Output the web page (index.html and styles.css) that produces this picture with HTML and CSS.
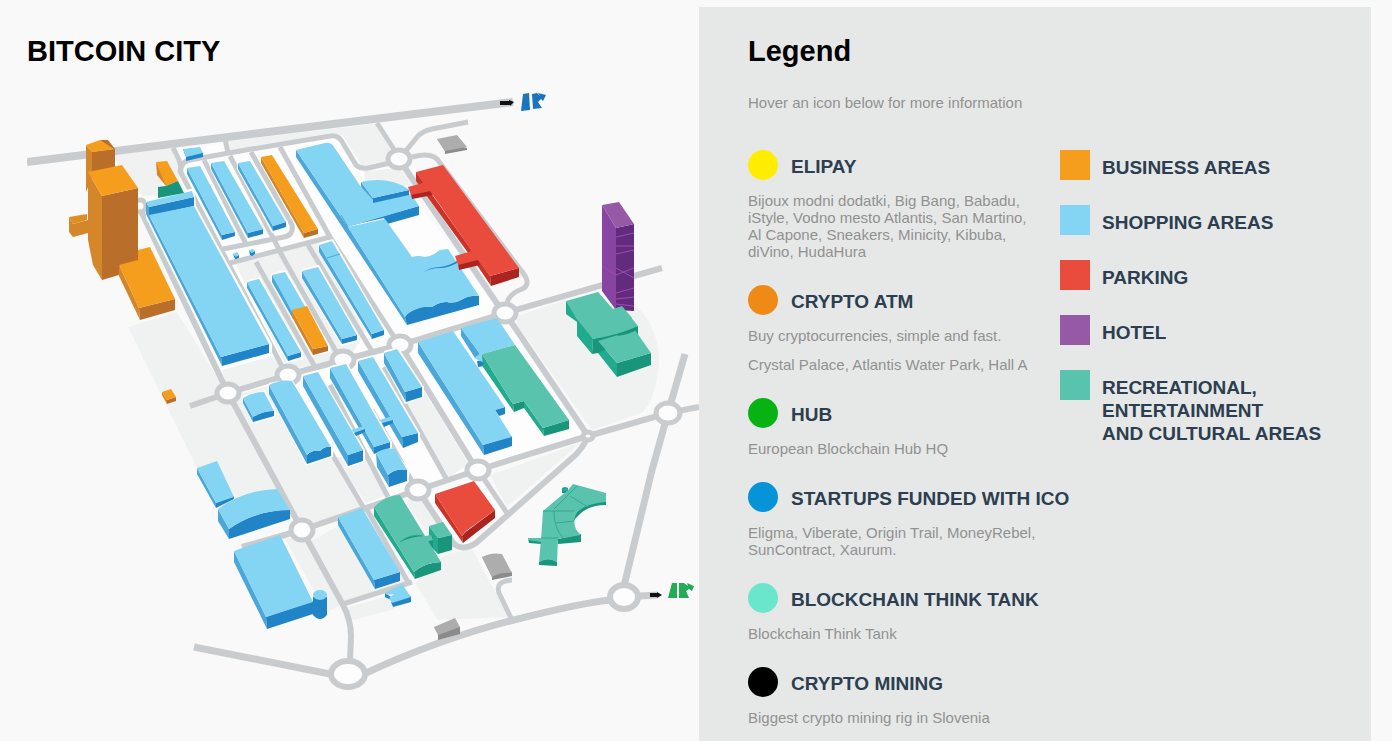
FILE: index.html
```html
<!DOCTYPE html>
<html lang="en">
<head>
<meta charset="utf-8">
<title>Bitcoin City</title>
<link rel="stylesheet" href="styles.css">
</head>
<body>
<main class="page">
<section class="city">
<h1 class="title">BITCOIN CITY</h1>
<svg class="map" viewBox="27 85 672 615" role="img" aria-label="Map of Bitcoin City">
<g class="white">
<path d="M174 149L375 125L398 160L407 190L505 313L588 436L478 472L400 500L345 360L228 393L142 212L146 198L192 188Z"/>
<path d="M228 393L400 345L500 320L585 436L478 470L418 490L302 530Z"/>
<path d="M427 495L478 477L503 513L463 545Z"/>
</g>
<g class="block">
<path d="M115 155L173 148L181 163L179 180L187 193L143 196L118 166Z"/>
<path d="M228 141L375 124L391 150L388 161L362 166L343 136L330 133L228 152Z"/>
<path d="M364 171L400 168L414 188L385 182L365 181Z"/>
<path d="M128 327L177 312L222 385L282 490L235 500L198 470Z"/>
<path d="M222 370L272 356L284 368L280 374L228 390Z"/>
<path d="M235 263L326 240L372 318L350 358L288 370Z"/>
<path d="M230 396L292 380L365 508L302 526Z"/>
<path d="M334 457L366 457L386 496L366 503Z"/>
<path d="M385 375L405 360L469 464L449 477Z"/>
<path d="M517 316L566 300L638 308Q660 330 659 366Q655 400 642 413L592 430L517 325Z"/>
<path d="M490 475L580 443L507 507Z"/>
<path d="M308 543L365 511L405 582L345 602Z"/>
<path d="M284 537L304 540L340 606L326 612Z"/>
<path d="M346 608L388 596L394 609L353 620Z"/>
<path d="M415 583L445 555L472 549L509 617L438 620Z"/>
<path d="M405 500L422 500L445 535L438 550Z"/>
</g>
<g class="road road-main">
<path d="M27 162L260 133L480 106L513 102"/>
</g>
<g class="road">
<path d="M142 213L228 393L302 530L343 605Q351 620 351 636L350 662"/>
<path d="M190 406L228 393L288 375L343 360L400 345L505 313L662 268"/>
<path d="M699 407L668 413L588 436L478 470L418 490L302 530L242 547"/>
<path d="M505 313L588 436"/>
<path d="M400 345L472 462"/>
<path d="M588 436Q583 449 571 459L476 543Q462 552 453 543L418 490"/>
<path d="M405 168L498 305"/>
</g>
<g class="road road-wide">
<path d="M194 647L330 674"/>
<path d="M366 673Q440 639 510 621T610 600"/>
<path d="M624 586L652 470L668 413L685 354"/>
<path d="M624 597L657 595"/>
</g>
<g class="road road-small">
<path d="M173 148Q183 165 180 171L284 370"/>
<path d="M181 172Q180 162 190 160L240 151L330 136Q339 134 344 145L356 165Q360 169 368 168L390 163"/>
<path d="M225 139L228 153"/>
<path d="M204 160L246 244"/>
<path d="M230 156L281 253"/>
<path d="M251 152L292 225Q294 235 284 237L223 249"/>
<path d="M280 147L330 237L398 343"/>
<path d="M230 263L330 237"/>
<path d="M256 262L315 367M280 252L338 355M308 245L373 353"/>
<path d="M290 383L365 510M330 385L388 497M384 367L447 480M372 410L413 483"/>
<path d="M478 470L507 513"/>
<path d="M366 508L408 582"/>
<path d="M343 604L412 582"/>
<path d="M377 123L395 151"/>
<path d="M404 153L418 136Q423 131 432 129L468 122"/>
<path d="M412 157Q434 151 440 163L520 269Q533 284 522 289Q509 294 507 303"/>
<path d="M512 580Q495 581 499 593L511 618"/>
</g>
<g class="ring">
<ellipse cx="140" cy="206" rx="6" ry="6"/>
<ellipse cx="399" cy="159" rx="11" ry="9"/>
<ellipse cx="228" cy="393" rx="11" ry="9"/>
<ellipse cx="288" cy="375" rx="11" ry="9"/>
<ellipse cx="343" cy="360" rx="11" ry="9"/>
<ellipse cx="400" cy="345" rx="11" ry="9"/>
<ellipse cx="505" cy="313" rx="11" ry="9"/>
<ellipse cx="302" cy="530" rx="11" ry="10"/>
<ellipse cx="418" cy="490" rx="11" ry="9"/>
<ellipse cx="478" cy="470" rx="11" ry="9"/>
<ellipse cx="588" cy="436" rx="5" ry="4"/>
<ellipse cx="668" cy="413" rx="12" ry="10"/>
<ellipse class="ring-wide" cx="624" cy="597" rx="14" ry="12"/>
<ellipse class="ring-wide" cx="348" cy="674" rx="17" ry="13"/>
</g>

<g class="plot">
<path d="M146 200L194 188L196 206L272 344V355L221 369L146 218Z"/>
<path d="M187 166L201 164L237 232V237L221 242L186 174ZM211 161L225 159L265 229V234L247 240L210 169ZM238 161L251 159L288 222V227L272 233L237 169Z"/>
<path d="M247 280L260 277L303 353V359L287 363L246 286ZM272 273L286 270L330 346V352L312 357L271 281ZM302 269L319 265L359 336V342L341 346L301 277ZM319 243L333 239L386 331V336L371 341L318 250Z"/>
<path d="M242 396L265 390L276 411V417L252 424ZM269 383L292 379L333 449V457L306 466L268 392ZM303 374L318 370L365 450V462L347 468L302 383ZM330 366L347 362L392 442V448L410 470L408 483L388 490L329 375ZM358 359L374 355L420 433V443L402 450L357 369ZM384 351L398 347L424 387V398L405 404L383 362Z"/>
</g>

<g class="blue-left">
<path d="M146 202L149 207V215L221 357L222 366L146 214Z"/>
<path d="M187 168L222 235V240L187 174ZM211 163L248 233V238L211 169ZM238 163L273 226V231L238 169Z"/>
<path d="M247 282L288 356V361L247 288ZM272 275L293 309V319L272 282ZM302 271L342 339V344L302 278ZM319 245L372 334V339L319 252Z"/>
<path d="M296 150L348 227L405 317L407 325L296 157Z"/>
<path d="M243 398L253 417V422L243 403ZM269 385L307 455V464L269 394ZM303 376L348 455V466L303 386ZM330 368L374 447V454L330 378ZM358 361L402 437L403 448L358 371ZM384 353L405 392L406 402L384 363Z"/>
<path d="M376 453L388 475L389 487L377 467ZM418 342L483 445L484 455L418 353ZM461 328L480 354L475 358L461 336Z"/>
<path d="M197 468L216 503V508L197 474ZM218 509L229 529V539L218 521ZM234 551L266 617L267 629L234 562ZM338 517L374 580L375 589L338 525Z"/>
<path d="M361 182L373 198V203L361 187Z"/>
</g>
<g class="blue-front">
<path d="M149 207L194 197V206L149 216ZM221 357L269 344V353L222 366Z"/>
<path d="M183 149L186 157V161L203 157V153Z"/>
<path d="M222 235L235 232V236L222 240ZM248 233L263 229V234L248 238ZM273 226L286 222V227L273 231Z"/>
<path d="M288 356L301 352V357L288 361ZM342 339L357 335V340L342 344ZM372 334L384 330V335L372 339Z"/>
<path d="M348 226L419 206V215L387 224L384 218Z"/>
<path d="M405 317Q408 312 416 309Q423 306 432 307Q439 302 447 302Q455 304 463 299Q470 295 479 296V305L407 325Z"/>
<path d="M253 417Q263 411 274 411V416L253 422ZM307 455Q313 449 320 451Q325 446 331 447V456L307 464ZM348 455L363 450V461L348 466ZM374 447L390 442V448L374 454ZM402 437L418 433V442L403 448ZM405 392L422 387V397L406 402Z"/>
<path d="M388 475Q396 468 407 470V481L389 487ZM483 445L512 436V446L484 455ZM495 410L505 407V414L499 416ZM477 361L485 360V366L478 367Z"/>
<path d="M216 503L234 496V499L216 508ZM229 529Q256 510 290 510V519L229 539Z"/>
<path d="M266 617L313 601V614L267 629ZM313 597V615Q320 623 327 615V597Z"/>
<path d="M374 580L400 572V581L375 589ZM391 602L411 596V602L393 607ZM385 593L391 597V600L385 597Z"/>
</g>
<g class="blue-top">
<path d="M183 149L200 147L203 153L186 157Z"/>
<path d="M146 202L192 191L194 197L149 207ZM149 215L194 206L269 344L221 357Z"/>
<path d="M187 168L200 166L235 232L222 235ZM211 163L224 161L263 229L248 233ZM238 163L250 161L286 222L273 226Z"/>
<path d="M247 282L259 279L301 352L288 356ZM272 275L285 272L306 308L292 312ZM302 271L318 267L357 335L342 339ZM319 245L332 241L384 330L372 334Z"/>
<path d="M296 150L325 143Q331 142 334 147L361 187L374 201L411 194L419 206L348 227Z"/>
<path d="M348 227L385 219L412 257Q418 255 425 257Q433 256 440 250L448 249L479 296Q470 295 463 299Q455 304 447 302Q439 302 432 307Q423 306 416 309Q408 312 405 317Z"/>
<path d="M243 398Q253 392 264 392L274 411Q263 411 253 417ZM269 385Q281 379 292 381L331 447Q325 446 320 451Q313 449 307 455ZM303 376L318 372L363 450L348 455ZM330 368L346 364L390 442L374 447ZM358 361L373 357L418 433L402 437ZM384 353L397 349L422 387L405 392Z"/>
<path d="M376 453Q385 447 395 449L407 470Q396 468 388 475Z"/>
<path d="M418 342L453 331L505 407L495 410L512 437L483 445ZM461 328L497 318L515 345L482 354L487 364L474 358L480 354Z"/>
<path d="M197 468L217 461L234 497L216 503ZM218 509Q244 490 277 489L290 510Q256 510 229 529ZM234 551L280 535L313 602L266 617Z"/>
<ellipse cx="320" cy="595" rx="7" ry="5"/>
<path d="M338 517L362 508L400 572L374 580ZM385 593L402 584L411 597L392 603L389 598L394 594L387 595Z"/>
<path d="M351 430L364 426L368 431L356 434ZM379 420L393 416L397 421L384 424Z"/>
</g>
<path class="blue-front" d="M373 198L409 190V195L373 203ZM354 433L365 429V432L356 436ZM382 423L393 420V423L384 427Z"/>
<path class="blue-front" d="M422 273Q430 267 440 267Q449 266 457 261V263Q448 268 440 268Q430 268 422 273Z"/>
<path class="blue-top" d="M361 182Q378 178 393 182Q404 185 409 190L373 198Z"/>
<path class="blue-front" d="M233 254L237 257V259L235 259ZM236 256L239 255V258L236 259ZM249 250L252 253V256L250 255ZM252 252L255 251V254L252 256Z"/>
<path class="blue-top" d="M233 254L237 252L239 255L236 257ZM249 250L253 249L255 251L252 253Z"/>
<path class="blue-seam" d="M327 258L340 254M348 227L341 215"/>

<g class="orange-left">
<path d="M86 145L92 152V178L86 192ZM88 172L102 196V280L93 265L88 240ZM69 217L73 224V237L69 232ZM119 265L139 308L140 320L119 276Z"/>
<path d="M156 162L166 182V186L157 175ZM261 157L304 233V238L261 163ZM292 310L313 349V355L292 317ZM162 392L167 400V404L162 395Z"/>
</g>
<g class="orange-front">
<path d="M92 152L115 149V168L92 174ZM102 196L138 188V262L119 267V275L102 280ZM139 308L175 299V310L140 320Z"/>
<path d="M304 233L318 229V234L304 238ZM313 349L328 346V351L313 355ZM167 400L176 397V401L167 404Z"/>
</g>
<path class="orange-left" d="M73 224L88 220V233L73 237Z"/>
<path class="orange-front" d="M100 140L108 140L115 149L112 149Z"/>
<g class="orange-top">
<path d="M86 145L100 140L114 149L92 152ZM88 172L122 165L138 188L102 196Z"/>
<path d="M119 265L138 260V250L150 247L175 299L139 308Z"/>
<path d="M156 162L167 161L178 181L166 186ZM261 157L272 155L318 229L304 233ZM292 310L307 306L328 346L313 349ZM162 392L171 389L176 397L167 400Z"/>
</g>
<path class="orange-cap" d="M69 217L87 214V220L73 224Z"/>
<path class="green-front" d="M158 187L166 186L178 181L184 193L158 198Z"/>

<g class="red-left">
<path d="M416 172L490 276L491 286L479 268L416 181ZM435 494L462 536L463 543L435 503Z"/>
</g>
<g class="red-front">
<path d="M411 194L430 190L433 195L412 199ZM458 264L478 259L480 265L459 270ZM490 276L519 268V277L491 286ZM462 536Q466 531 471 528L495 510V518L463 543Z"/>
</g>
<g class="red-top">
<path d="M416 172L443 165L519 268L490 276L478 260L458 265L455 256L472 251L430 191L411 195L408 187L423 183Z"/>
<path d="M435 494L474 481L495 510L473 526Q466 530 462 536Z"/>
</g>

<g class="green-left">
<path d="M482 354L513 404L514 412L483 367ZM524 401L543 428L544 436L524 408ZM374 507L414 572L415 579L374 516Z"/>
<path d="M566 301L580 319L593 339L592 354L577 336V322L566 314ZM598 341L617 363V377L598 353ZM429 526L438 538V554L429 545Z"/>
</g>
<g class="green-front">
<path d="M513 404L524 401V408L514 412ZM543 428L569 420V429L544 436ZM414 572Q426 562 441 562V570L415 579Z"/>
<path d="M593 339L638 326V335L598 353L592 354ZM617 363L651 353V365L617 377ZM438 538L452 535V550L438 554ZM424 539L433 537V548L424 546Z"/>
<path d="M558 539L581 534V542L558 544ZM539 562Q548 556 557 562V566L539 565ZM528 538L541 541V544L529 543ZM606 493V505Q587 505 577 517Q573 520 574 526Q570 505 606 500ZM562 488V493H568V488Z"/>
</g>
<g class="green-top">
<path d="M482 354L515 345L569 420L543 428L524 401L513 404Z"/>
<path d="M374 507Q386 495 400 495L441 562Q426 562 414 572ZM429 526L443 522L452 535L438 538ZM420 537L431 535L433 540L423 543Z"/>
<path d="M566 301L598 292L613 309L622 306L638 326Q619 335 593 339L576 318ZM598 341L635 330L651 353L617 363Z"/>
<path d="M543 511L568 490L573 484L606 493V502Q582 504 575 515Q572 528 581 535L558 539L557 562Q548 557 539 562L541 540ZM528 538L541 538V542L528 540Z"/>
</g>
<ellipse class="green-dot" cx="565" cy="489" rx="3" ry="2"/>
<path class="green-seam" d="M543 511H574M554 511Q554 528 563 538M556 523L574 521M554 509L577 486M570 496L588 507M541 538H558M400 542Q411 533 423 536"/>
<path class="green-front" d="M400 542Q411 534 423 536Q410 537 400 542ZM618 334L637 328L635 331Q627 335 618 336Z"/>

<path class="hotel-left" d="M602 205L616 228V310L602 291Z"/>
<path class="hotel-front" d="M616 228L634 224V311L616 310Z"/>
<path class="hotel-top" d="M602 205L619 202L634 224L616 228Z"/>
<path class="hotel-lines" d="M616 237L634 233M616 246H634M616 254L634 250M602 266L616 275L634 268M616 268L634 278M616 293L634 288M616 299L634 297M616 304L634 306"/>
<path class="green-top" d="M610 311L616 308L622 306L632 318L622 322Z"/>

<path class="gray-front" d="M437 139L445 151V154L467 150V148ZM482 557L492 577V580L512 576V572ZM434 627L438 634V640L460 634V627Z"/>
<path class="gray-top" d="M437 139L457 135L467 147L445 151ZM482 557Q491 552 502 554L512 573Q501 572 492 577ZM434 627L455 618L460 627L438 635Z"/>

<path class="arrow" d="M500 101L509 101V100L514 102L510 106V105L500 105ZM650 593H657V592L662 595L657 598V597H650Z"/>
<path class="exit-blue" d="M523 94L529 93L530 110L521 111ZM532 94L537 93L540 96L538 93L546 95L543 101L541 99L538 102L542 108L533 109Z"/>
<path class="exit-green" d="M672 583H677V598H668ZM679 583H684L688 586L687 583L694 586L692 591L689 589L686 591L689 598H679Z"/>
</svg>
</section>

<section class="legend">
<h2 class="title">Legend</h2>
<p class="hint">Hover an icon below for more information</p>
<div class="columns">
<ul class="services">
<li class="service"><h3 class="name"><span class="dot dot-yellow"></span>ELIPAY</h3>
<p class="text">Bijoux modni dodatki, Big Bang, Babadu, iStyle, Vodno mesto Atlantis, San Martino, Al Capone, Sneakers, Minicity, Kibuba, diVino, HudaHura</p></li>
<li class="service"><h3 class="name"><span class="dot dot-orange"></span>CRYPTO ATM</h3>
<p class="text">Buy cryptocurrencies, simple and fast.</p>
<p class="text">Crystal Palace, Atlantis Water Park, Hall A</p></li>
<li class="service"><h3 class="name"><span class="dot dot-green"></span>HUB</h3>
<p class="text">European Blockchain Hub HQ</p></li>
<li class="service"><h3 class="name"><span class="dot dot-blue"></span>STARTUPS FUNDED WITH ICO</h3>
<p class="text">Eligma, Viberate, Origin Trail, MoneyRebel, SunContract, Xaurum.</p></li>
<li class="service"><h3 class="name"><span class="dot dot-mint"></span>BLOCKCHAIN THINK TANK</h3>
<p class="text">Blockchain Think Tank</p></li>
<li class="service"><h3 class="name"><span class="dot dot-black"></span>CRYPTO MINING</h3>
<p class="text">Biggest crypto mining rig in Slovenia</p></li>
</ul>
<ul class="areas">
<li class="area"><span class="swatch swatch-business"></span><span class="label">BUSINESS AREAS</span></li>
<li class="area"><span class="swatch swatch-shopping"></span><span class="label">SHOPPING AREAS</span></li>
<li class="area"><span class="swatch swatch-parking"></span><span class="label">PARKING</span></li>
<li class="area"><span class="swatch swatch-hotel"></span><span class="label">HOTEL</span></li>
<li class="area"><span class="swatch swatch-culture"></span><span class="label">RECREATIONAL,<br>ENTERTAINMENT<br>AND CULTURAL AREAS</span></li>
</ul>
</div>
</section>
</main>
</body>
</html>
```
FILE: styles.css
```css
* { box-sizing: border-box; }
body {
  margin: 0;
  background: #f9f9f9;
  color: #919191;
  font-family: "Liberation Sans", Arial, sans-serif;
  font-size: 15px;
  line-height: 17px;
}
h1, h2, h3, p, ul { margin: 0; padding: 0; }
ul { list-style: none; }
.page {
  display: grid;
  grid-template-columns: 1fr 1fr;
  min-height: 100vh;
  padding: 7px 21px 0 27px;
}
.city { padding-top: 27px; }
.title {
  color: #000;
  font-size: 29px;
  line-height: 34px;
}
.map {
  display: block;
  width: 100%;
  margin-top: 17px;
}
.legend {
  padding: 27px 24px 0 49px;
  background: #e6e8e7;
}
.hint { margin-top: 26px; }
.columns {
  display: grid;
  grid-template-columns: 312px 1fr;
  margin-top: 39px;
}
.services {
  display: flex;
  flex-direction: column;
  gap: 25px;
}
.service {
  display: flex;
  flex-direction: column;
  gap: 12px;
}
.name {
  display: flex;
  align-items: flex-start;
  gap: 13px;
  height: 30px;
  color: #2c3e50;
  font-size: 19px;
  line-height: 34px;
  white-space: nowrap;
}
.text { max-width: 291px; }
.dot {
  flex: none;
  width: 30px;
  height: 30px;
  border-radius: 50%;
}
.dot-yellow { background: #ffed00; }
.dot-orange { background: #f08a17; }
.dot-green { background: #06b312; }
.dot-blue { background: #0693d7; }
.dot-mint { background: #6ae6cd; }
.dot-black { background: #000; }
.areas {
  display: flex;
  flex-direction: column;
  gap: 25px;
}
.area {
  display: flex;
  align-items: flex-start;
  gap: 12px;
  height: 30px;
  color: #2c3e50;
  font-size: 19px;
  font-weight: bold;
  line-height: 23px;
  white-space: nowrap;
}
.area .label { padding-top: 6px; }
.swatch {
  flex: none;
  width: 30px;
  height: 30px;
}
.swatch-business { background: #f59e1d; }
.swatch-shopping { background: #84d4f3; }
.swatch-parking { background: #e94c3d; }
.swatch-hotel { background: #9559a6; }
.swatch-culture { background: #59c3ad; }

.white { fill: #fdfdfd; }
.plot { fill: #fdfdfd; }
.block { fill: #f0f2f1; }
.road { fill: none; stroke: #c9cccf; stroke-width: 6; stroke-linejoin: round; }
.road-main { stroke-width: 8; }
.road-wide { stroke-width: 7; }
.road-small { stroke-width: 5; }
.ring { fill: #fdfdfd; stroke: #c9cccf; stroke-width: 5; }
.ring-wide { stroke-width: 6; }
.blue-top { fill: #84d4f3; }
.blue-left { fill: #4aa7d8; }
.blue-front { fill: #2184c7; }
.blue-seam { fill: none; stroke: #4aa7d8; }
.orange-top { fill: #f59e1d; }
.orange-left { fill: #d4862a; }
.orange-front { fill: #b96f29; }
.orange-cap { fill: #e08d24; }
.red-top { fill: #e94c3d; }
.red-left { fill: #c93429; }
.red-front { fill: #ac2420; }
.green-top { fill: #59c3ad; }
.green-left { fill: #21aa8b; }
.green-front { fill: #18957a; }
.green-dot { fill: #26a5a0; }
.green-seam { fill: none; stroke: #35a892; stroke-width: 1; }
.hotel-top { fill: #9559a6; }
.hotel-left { fill: #8744a0; }
.hotel-front { fill: #632b7e; }
.hotel-lines { fill: none; stroke: #a04bb2; stroke-width: 1; }
.gray-top { fill: #adadad; }
.gray-front { fill: #8b8b8b; }
.arrow { fill: #111; }
.exit-blue { fill: #1c75bc; }
.exit-green { fill: #23ac55; }
```
